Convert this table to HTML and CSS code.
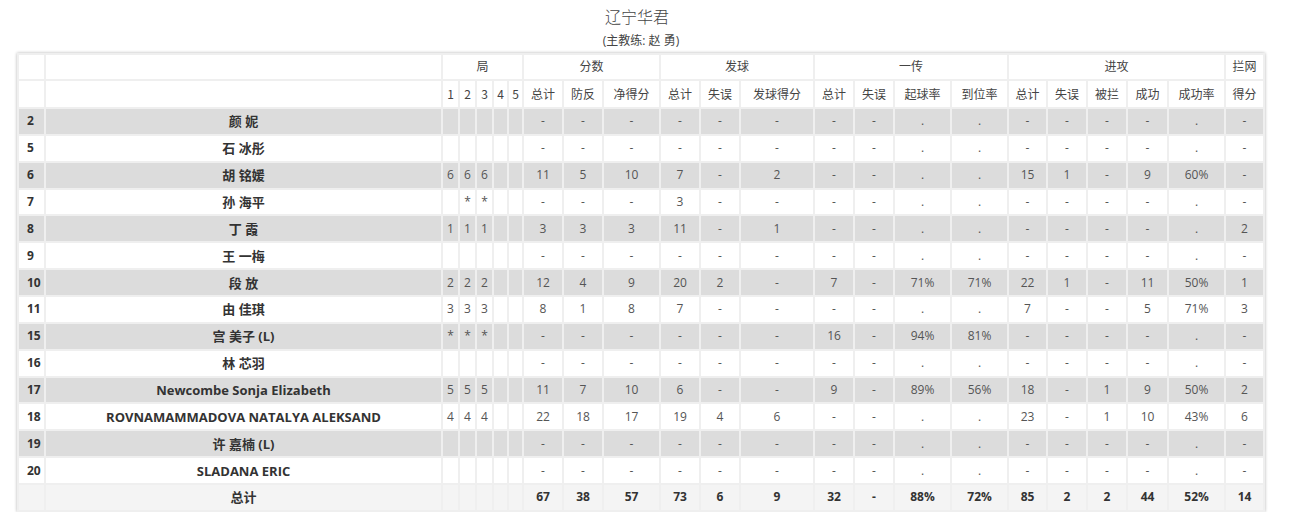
FILE: index.html
```html
<!DOCTYPE html>
<html lang="zh">
<head>
<meta charset="utf-8">
<title>辽宁华君</title>
<link rel="stylesheet" href="styles.css">
</head>
<body>
<div class="wrap">
  <div class="title">辽宁华君</div>
  <div class="subtitle">(主教练: 赵 勇)</div>
  <table class="stats">
    <colgroup>
      <col style="width:27px"><col style="width:397px">
      <col style="width:17px"><col style="width:17px"><col style="width:17px"><col style="width:15px"><col style="width:15px">
      <col style="width:40px"><col style="width:40px"><col style="width:57px">
      <col style="width:40px"><col style="width:40px"><col style="width:74px">
      <col style="width:40px"><col style="width:40px"><col style="width:57px"><col style="width:57px">
      <col style="width:39px"><col style="width:40px"><col style="width:40px"><col style="width:41px"><col style="width:57px">
      <col style="width:39px">
    </colgroup>
    <thead>
      <tr class="group">
        <th></th><th></th>
        <th colspan="5">局</th>
        <th colspan="3">分数</th>
        <th colspan="3">发球</th>
        <th colspan="4">一传</th>
        <th colspan="5">进攻</th>
        <th>拦网</th>
      </tr>
      <tr class="sub">
        <th></th><th></th>
        <th>1</th><th>2</th><th>3</th><th>4</th><th>5</th>
        <th>总计</th><th>防反</th><th>净得分</th>
        <th>总计</th><th>失误</th><th>发球得分</th>
        <th>总计</th><th>失误</th><th>起球率</th><th>到位率</th>
        <th>总计</th><th>失误</th><th>被拦</th><th>成功</th><th>成功率</th>
        <th>得分</th>
      </tr>
    </thead>
    <tbody>
      <tr class="alt"><td class="no">2</td><td class="name">颜 妮</td><td></td><td></td><td></td><td></td><td></td><td>-</td><td>-</td><td>-</td><td>-</td><td>-</td><td>-</td><td>-</td><td>-</td><td>.</td><td>.</td><td>-</td><td>-</td><td>-</td><td>-</td><td>.</td><td>-</td></tr>
      <tr><td class="no">5</td><td class="name">石 冰彤</td><td></td><td></td><td></td><td></td><td></td><td>-</td><td>-</td><td>-</td><td>-</td><td>-</td><td>-</td><td>-</td><td>-</td><td>.</td><td>.</td><td>-</td><td>-</td><td>-</td><td>-</td><td>.</td><td>-</td></tr>
      <tr class="alt"><td class="no">6</td><td class="name">胡 铭媛</td><td>6</td><td>6</td><td>6</td><td></td><td></td><td>11</td><td>5</td><td>10</td><td>7</td><td>-</td><td>2</td><td>-</td><td>-</td><td>.</td><td>.</td><td>15</td><td>1</td><td>-</td><td>9</td><td>60%</td><td>-</td></tr>
      <tr><td class="no">7</td><td class="name">孙 海平</td><td></td><td>*</td><td>*</td><td></td><td></td><td>-</td><td>-</td><td>-</td><td>3</td><td>-</td><td>-</td><td>-</td><td>-</td><td>.</td><td>.</td><td>-</td><td>-</td><td>-</td><td>-</td><td>.</td><td>-</td></tr>
      <tr class="alt"><td class="no">8</td><td class="name">丁 霞</td><td>1</td><td>1</td><td>1</td><td></td><td></td><td>3</td><td>3</td><td>3</td><td>11</td><td>-</td><td>1</td><td>-</td><td>-</td><td>.</td><td>.</td><td>-</td><td>-</td><td>-</td><td>-</td><td>.</td><td>2</td></tr>
      <tr><td class="no">9</td><td class="name">王 一梅</td><td></td><td></td><td></td><td></td><td></td><td>-</td><td>-</td><td>-</td><td>-</td><td>-</td><td>-</td><td>-</td><td>-</td><td>.</td><td>.</td><td>-</td><td>-</td><td>-</td><td>-</td><td>.</td><td>-</td></tr>
      <tr class="alt"><td class="no">10</td><td class="name">段 放</td><td>2</td><td>2</td><td>2</td><td></td><td></td><td>12</td><td>4</td><td>9</td><td>20</td><td>2</td><td>-</td><td>7</td><td>-</td><td>71%</td><td>71%</td><td>22</td><td>1</td><td>-</td><td>11</td><td>50%</td><td>1</td></tr>
      <tr><td class="no">11</td><td class="name">由 佳琪</td><td>3</td><td>3</td><td>3</td><td></td><td></td><td>8</td><td>1</td><td>8</td><td>7</td><td>-</td><td>-</td><td>-</td><td>-</td><td>.</td><td>.</td><td>7</td><td>-</td><td>-</td><td>5</td><td>71%</td><td>3</td></tr>
      <tr class="alt"><td class="no">15</td><td class="name">宫 美子 (L)</td><td>*</td><td>*</td><td>*</td><td></td><td></td><td>-</td><td>-</td><td>-</td><td>-</td><td>-</td><td>-</td><td>16</td><td>-</td><td>94%</td><td>81%</td><td>-</td><td>-</td><td>-</td><td>-</td><td>.</td><td>-</td></tr>
      <tr><td class="no">16</td><td class="name">林 芯羽</td><td></td><td></td><td></td><td></td><td></td><td>-</td><td>-</td><td>-</td><td>-</td><td>-</td><td>-</td><td>-</td><td>-</td><td>.</td><td>.</td><td>-</td><td>-</td><td>-</td><td>-</td><td>.</td><td>-</td></tr>
      <tr class="alt"><td class="no">17</td><td class="name">Newcombe Sonja Elizabeth</td><td>5</td><td>5</td><td>5</td><td></td><td></td><td>11</td><td>7</td><td>10</td><td>6</td><td>-</td><td>-</td><td>9</td><td>-</td><td>89%</td><td>56%</td><td>18</td><td>-</td><td>1</td><td>9</td><td>50%</td><td>2</td></tr>
      <tr><td class="no">18</td><td class="name">ROVNAMAMMADOVA NATALYA ALEKSAND</td><td>4</td><td>4</td><td>4</td><td></td><td></td><td>22</td><td>18</td><td>17</td><td>19</td><td>4</td><td>6</td><td>-</td><td>-</td><td>.</td><td>.</td><td>23</td><td>-</td><td>1</td><td>10</td><td>43%</td><td>6</td></tr>
      <tr class="alt"><td class="no">19</td><td class="name">许 嘉楠 (L)</td><td></td><td></td><td></td><td></td><td></td><td>-</td><td>-</td><td>-</td><td>-</td><td>-</td><td>-</td><td>-</td><td>-</td><td>.</td><td>.</td><td>-</td><td>-</td><td>-</td><td>-</td><td>.</td><td>-</td></tr>
      <tr><td class="no">20</td><td class="name">SLADANA ERIC</td><td></td><td></td><td></td><td></td><td></td><td>-</td><td>-</td><td>-</td><td>-</td><td>-</td><td>-</td><td>-</td><td>-</td><td>.</td><td>.</td><td>-</td><td>-</td><td>-</td><td>-</td><td>.</td><td>-</td></tr>
      <tr class="total"><td class="no"></td><td class="name">总计</td><td></td><td></td><td></td><td></td><td></td><td>67</td><td>38</td><td>57</td><td>73</td><td>6</td><td>9</td><td>32</td><td>-</td><td>88%</td><td>72%</td><td>85</td><td>2</td><td>2</td><td>44</td><td>52%</td><td>14</td></tr>
    </tbody>
  </table>
</div>
</body>
</html>
```
FILE: styles.css
```css
html, body {
  margin: 0;
  padding: 0;
  background: #fff;
}
body {
  font-family: "Open Sans", "Noto Sans CJK SC", sans-serif;
  color: #555;
  font-size: 12px;
}
.wrap {
  width: 1248px;
  margin-left: 17px;
  padding-top: 4px;
}
.title {
  text-align: center;
  font-size: 16px;
  line-height: 24px;
  color: #444;
  font-family: "Noto Sans CJK SC", sans-serif;
  font-weight: 300;
  margin-left: -8px;
}
.subtitle {
  text-align: center;
  font-size: 12px;
  line-height: 18px;
  color: #444;
  margin-top: 4px;
  font-family: "Open Sans", "Noto Sans CJK SC", sans-serif;
}
.stats {
  margin-top: 3px;
  width: 1246px;
  table-layout: fixed;
  border-collapse: collapse;
  box-shadow: 0 0 3px rgba(0, 0, 0, 0.3);
}
.stats th,
.stats td {
  border: 2px solid #efefef;
  height: 24.87px;
  padding: 0;
  text-align: center;
  font-weight: normal;
  font-size: 12px;
  line-height: 22px;
  color: #555;
  white-space: nowrap;
  overflow: hidden;
}
.stats thead th {
  background: #fff;
  font-family: "Noto Sans CJK SC", sans-serif;
  color: #444;
}
.stats tr.group th {
  height: 24px;
  line-height: 20px;
  padding-bottom: 3px;
  height: 21px;
}
.stats tr.sub th {
  height: 26px;
}
.stats tr.alt td {
  background: #dcdcdc;
}
.stats td.no {
  text-align: left;
  padding-left: 8px;
  font-weight: bold;
  color: #333;
}
.stats td.name {
  font-weight: bold;
  font-size: 13px;
  color: #333;
}
.stats tr.total td {
  background: #f4f4f4;
  font-weight: bold;
  color: #333;
}
```
